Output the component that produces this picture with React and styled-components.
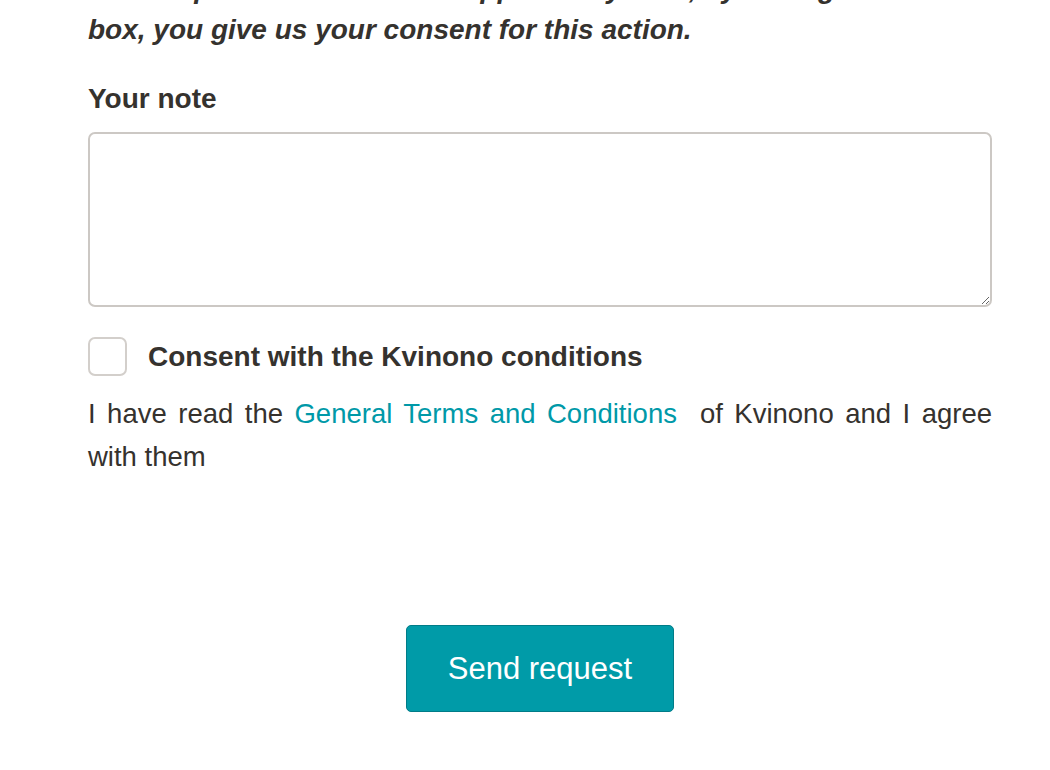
import React from "react";
import styled, { createGlobalStyle } from "styled-components";

const Global = createGlobalStyle`
  html, body { margin: 0; padding: 0; background: #fff; }
  body { font-family: "Liberation Sans", Arial, sans-serif; color: #35322e; overflow: hidden; }
`;

const Page = styled.div`
  width: 904px;
  margin-left: 88px;
  display: flex;
  flex-direction: column;
`;

const Notice = styled.p`
  margin: -32.5px 0 0 0;
  font-size: 28px;
  line-height: 41px;
  font-weight: bold;
  font-style: italic;
`;

const NoticeLine = styled.span`
  display: block;
  white-space: nowrap;
`;

const Label = styled.label`
  display: block;
  margin-top: 33.5px;
  font-size: 28px;
  line-height: 32px;
  font-weight: bold;
`;

const NoteArea = styled.textarea`
  box-sizing: border-box;
  margin-top: 17px;
  width: 904px;
  height: 175px;
  border: 2px solid #ccc8c4;
  border-radius: 7px;
  resize: vertical;
  font-family: inherit;
  font-size: 20px;
  padding: 10px;
  outline: none;
`;

const ConsentRow = styled.div`
  display: flex;
  align-items: center;
  gap: 21px;
  margin-top: 30px;
`;

const Box = styled.span`
  box-sizing: border-box;
  width: 39px;
  height: 39px;
  border: 2px solid #d3cfcb;
  border-radius: 7px;
  flex: none;
`;

const ConsentLabel = styled.span`
  font-size: 28px;
  font-weight: bold;
  line-height: 32px;
`;

const Terms = styled.p`
  margin: 16px 0 0 0;
  font-size: 27.5px;
  line-height: 43px;
  text-align: justify;
`;

const Link = styled.a`
  color: #0099a8;
  text-decoration: none;
`;

const Actions = styled.div`
  display: flex;
  justify-content: center;
  margin-top: 147px;
`;

const Button = styled.button`
  width: 268px;
  height: 87px;
  background: #009ba8;
  border: 1px solid #007c88;
  border-radius: 5px;
  color: #fff;
  font-family: "Liberation Sans", Arial, sans-serif;
  font-size: 31px;
  cursor: pointer;
`;

export default function App() {
  return (
    <>
      <Global />
      <Page>
        <Notice>
          <NoticeLine>Your request is sent to the supplier only after, by ticking the</NoticeLine>
          <NoticeLine>box, you give us your consent for this action.</NoticeLine>
        </Notice>
        <Label>Your note</Label>
        <NoteArea />
        <ConsentRow>
          <Box />
          <ConsentLabel>Consent with the Kvinono conditions</ConsentLabel>
        </ConsentRow>
        <Terms>
          I have read the <Link href="#">General Terms and Conditions</Link>&nbsp; of Kvinono and I agree with them
        </Terms>
        <Actions>
          <Button>Send request</Button>
        </Actions>
      </Page>
    </>
  );
}
